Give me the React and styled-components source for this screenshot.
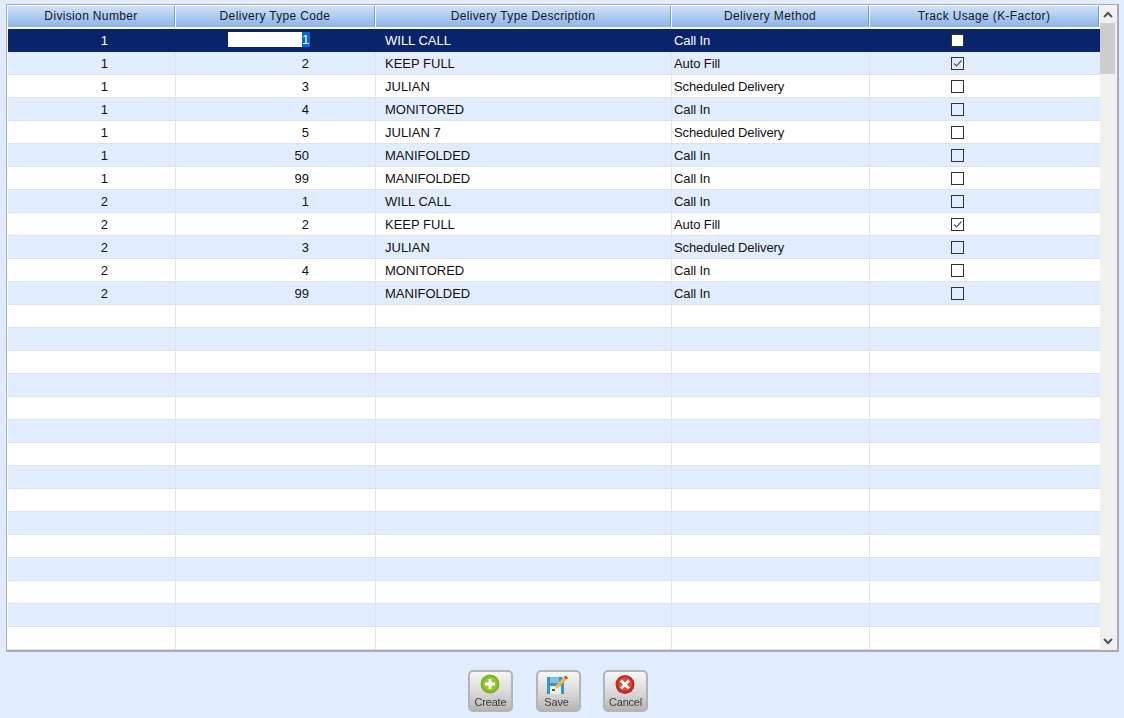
import React from "react";
import styled, { createGlobalStyle } from "styled-components";

const Global = createGlobalStyle`
  html, body { margin: 0; padding: 0; background: #e1edff; }
  body { font-family: "Liberation Sans", Arial, sans-serif; overflow: hidden; }
`;

const COLS = "168px 200px 296px 198px 229px";

const Page = styled.div`
  width: 1124px;
  height: 718px;
  display: flex;
  flex-direction: column;
  background: #e1edff;
  padding: 4px 5px 0 6px;
  box-sizing: border-box;
`;
const Panel = styled.div`
  height: 648px;
  box-sizing: border-box;
  border: 1px solid #a9abb1;
  border-bottom-width: 2px;
  border-right-width: 2px;
  background: #fff;
  display: flex;
`;
const Table = styled.div`
  width: 1092px;
  padding: 1px 0 0 1px;
  display: flex;
  flex-direction: column;
`;
const HeaderRow = styled.div`
  display: grid;
  grid-template-columns: ${COLS};
  height: 21px;
  margin-right: 1px;
  margin-bottom: 2px;
`;
const HeaderCell = styled.div`
  background: linear-gradient(#cfe2fa, #8db3e8);
  border-right: 1px solid #6f9ce0;
  margin-right: 1px;
  font-size: 12px;
  letter-spacing: 0.35px;
  line-height: 21px;
  text-align: center;
  color: #10182c;
  white-space: nowrap;
  &:last-child { margin-right: 0; }
`;
const Row = styled.div`
  display: grid;
  grid-template-columns: ${COLS};
  height: 23px;
  box-sizing: border-box;
  flex: none;
  background: ${(p) => (p.$selected ? "#09246a" : p.$alt ? "#e1edff" : "#fff")};
  color: ${(p) => (p.$selected ? "#fff" : "#111")};
  border-bottom: 1px solid ${(p) => (p.$selected ? "#09246a" : "#e0e1e8")};
`;
const Cell = styled.div`
  box-sizing: border-box;
  font-size: 13px;
  line-height: 24px;
  white-space: nowrap;
  border-right: 1px solid ${(p) => (p.$selected ? "transparent" : "#e2e3e9")};
  text-align: ${(p) => p.$align || "left"};
  padding: ${(p) => p.$pad || "0"};
  letter-spacing: ${(p) => p.$spacing || 0}px;
  &:last-child { border-right: none; }
`;
const CheckCell = styled(Cell)`
  display: flex;
  justify-content: center;
  align-items: center;
  padding-right: 54px;
`;
const Editor = styled.div`
  margin: 3px 0 0 52px;
  width: 81px;
  height: 15px;
  display: flex;
  justify-content: flex-end;
  background: #fff;
  border-right: 1px solid #0a66c8;
`;
const Selected = styled.span`
  background: #0a66c8;
  color: #fff;
  width: 7px;
  line-height: 16px;
  text-align: right;
  font-size: 13px;
`;
const Box = styled.span`
  width: 11px;
  height: 11px;
  border: 1px solid #333;
  background: ${(p) => (p.$filled ? "#fff" : "transparent")};
  display: flex;
  margin-top: -2px;
`;
const Scrollbar = styled.div`
  width: 18px;
  background: #f0f0f0;
  display: flex;
  flex-direction: column;
  padding-right: 2px;
  box-sizing: border-box;
`;
const ArrowBox = styled.div`
  height: 18px;
  flex: none;
  display: flex;
  align-items: center;
  justify-content: center;
  color: #505050;
`;
const Thumb = styled.div`
  height: 51px;
  flex: none;
  background: #cdcdcd;
`;
const Track = styled.div`
  flex: 1;
`;
const Footer = styled.div`
  display: flex;
  padding: 18px 0 0 462px;
`;
const ActionButton = styled.button`
  width: 45px;
  height: 42px;
  margin-right: ${(p) => p.$gap}px;
  padding: 2px ${(p) => p.$shift || 0}px 0 0;
  box-sizing: border-box;
  border: 2px solid #b2b4b6;
  border-radius: 5px;
  background: linear-gradient(#f6f6f6, #d8d8d8 55%, #b5b5b5);
  display: flex;
  flex-direction: column;
  align-items: center;
  font-family: "Liberation Sans", Arial, sans-serif;
  font-size: 11px;
  line-height: 12px;
  color: #3a3a3a;
  letter-spacing: -0.2px;
`;
const ButtonInner = styled.span`
  display: flex;
  flex-direction: column;
  align-items: center;
  filter: blur(0.4px);
`;
const IconWrap = styled.span`
  display: flex;
  height: 21px;
  margin-bottom: 1px;
`;

const data = [
  [1, 1, "WILL CALL", "Call In", false],
  [1, 2, "KEEP FULL", "Auto Fill", true],
  [1, 3, "JULIAN", "Scheduled Delivery", false],
  [1, 4, "MONITORED", "Call In", false],
  [1, 5, "JULIAN 7", "Scheduled Delivery", false],
  [1, 50, "MANIFOLDED", "Call In", false],
  [1, 99, "MANIFOLDED", "Call In", false],
  [2, 1, "WILL CALL", "Call In", false],
  [2, 2, "KEEP FULL", "Auto Fill", true],
  [2, 3, "JULIAN", "Scheduled Delivery", false],
  [2, 4, "MONITORED", "Call In", false],
  [2, 99, "MANIFOLDED", "Call In", false],
];
const headers = ["Division Number", "Delivery Type Code", "Delivery Type Description", "Delivery Method", "Track Usage (K-Factor)"];

const Check = () => (
  <svg width="11" height="11" viewBox="0 0 11 11">
    <path d="M2 5.5 L4.5 8 L9.5 2.5" fill="none" stroke="#555" strokeWidth="1.2" />
  </svg>
);

const CreateIcon = () => (
  <svg width="20" height="20" viewBox="0 0 20 20">
    <circle cx="10" cy="10" r="9.5" fill="#7fb51e" />
    <circle cx="10" cy="10" r="7" fill="#93c92c" />
    <path d="M10 5v10M5 10h10" stroke="#fff" strokeWidth="3" />
  </svg>
);
const SaveIcon = () => (
  <svg width="22" height="21" viewBox="0 0 22 21">
    <path d="M1 3h15l2 2v15H1z" fill="#3f90cf" />
    <rect x="4" y="3" width="9" height="6" fill="#7fc0ea" />
    <rect x="4" y="12" width="11" height="8" fill="#f1ede0" />
    <rect x="6" y="15" width="3" height="2" fill="#555" />
    <path d="M10 11 L18 3 L20.5 5.5 L12.5 13.5 L9.5 14z" fill="#f0b93a" />
    <path d="M18 3 L19.5 1.5 L22 4 L20.5 5.5z" fill="#d8342a" />
  </svg>
);
const CancelIcon = () => (
  <svg width="20" height="21" viewBox="0 0 20 21">
    <circle cx="10" cy="10.5" r="9.5" fill="#c3271f" />
    <circle cx="10" cy="10" r="7" fill="#dc4a3c" />
    <path d="M6 6.5l8 8M14 6.5l-8 8" stroke="#fff" strokeWidth="3" />
  </svg>
);

export default function App() {
  return (
    <Page>
      <Global />
      <Panel>
        <Table>
          <HeaderRow>
            {headers.map((h) => (
              <HeaderCell key={h}>{h}</HeaderCell>
            ))}
          </HeaderRow>
          {Array.from({ length: 27 }).map((_, i) => {
            const d = data[i];
            const sel = i === 0;
            const alt = i % 2 === 1;
            return (
              <Row key={i} $selected={sel} $alt={alt}>
                <Cell $selected={sel} $align="right" $pad="0 67px 0 0">{d && d[0]}</Cell>
                <Cell $selected={sel} $align="right" $pad={sel ? "0" : "0 66px 0 0"}>
                  {sel ? (
                    <Editor><Selected>1</Selected></Editor>
                  ) : (
                    d && d[1]
                  )}
                </Cell>
                <Cell $selected={sel} $pad="0 0 0 9px">{d && d[2]}</Cell>
                <Cell $selected={sel} $pad="0 0 0 2px" $spacing={-0.1}>{d && d[3]}</Cell>
                <CheckCell $selected={sel}>
                  {d && <Box $filled={sel}>{d[4] && <Check />}</Box>}
                </CheckCell>
              </Row>
            );
          })}
        </Table>
        <Scrollbar>
          <ArrowBox>
            <svg width="10" height="7" viewBox="0 0 10 7">
              <path d="M1 6 L5 2 L9 6" fill="none" stroke="currentColor" strokeWidth="2" />
            </svg>
          </ArrowBox>
          <Thumb />
          <Track />
          <ArrowBox>
            <svg width="10" height="7" viewBox="0 0 10 7">
              <path d="M1 1 L5 5 L9 1" fill="none" stroke="currentColor" strokeWidth="2" />
            </svg>
          </ArrowBox>
        </Scrollbar>
      </Panel>
      <Footer>
        <ActionButton $gap={23}>
          <ButtonInner><IconWrap><CreateIcon /></IconWrap>Create</ButtonInner>
        </ActionButton>
        <ActionButton $gap={22} $shift={4}>
          <ButtonInner><IconWrap><SaveIcon /></IconWrap>Save</ButtonInner>
        </ActionButton>
        <ActionButton $gap={0}>
          <ButtonInner><IconWrap><CancelIcon /></IconWrap>Cancel</ButtonInner>
        </ActionButton>
      </Footer>
    </Page>
  );
}
